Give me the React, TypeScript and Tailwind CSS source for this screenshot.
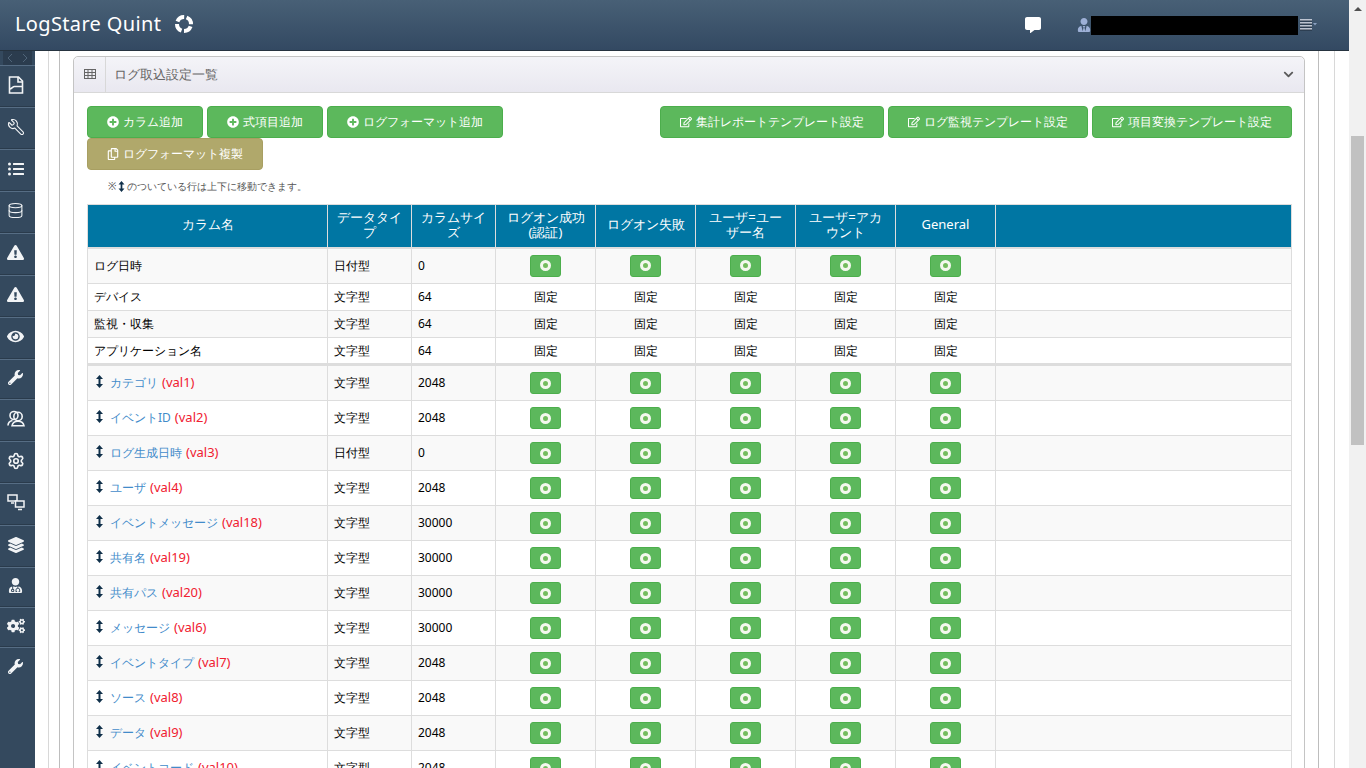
import React from "react";
import { FaPlusCircle, FaRegEdit, FaRegCopy, FaChevronDown, FaCommentAlt, FaUserTie, FaListUl, FaExclamationTriangle, FaEye, FaWrench, FaLayerGroup, FaUserMd, FaCogs } from "react-icons/fa";
import { Wrench, Database, Settings } from "lucide-react";

const DocIcon = () => (
  <svg width="16" height="18" viewBox="0 0 16 18" fill="none" stroke="#f2f4f6" strokeWidth="1.6">
    <path d="M1.5 1h9l4 4v12h-13z" />
    <path d="M10 1v5h4.5" />
    <path d="M1.5 13c2.500 0 3-2.500 5-2.500h7.500" />
  </svg>
);
const PeopleIcon = () => (
  <svg width="18" height="17" viewBox="0 0 18 17" fill="none" stroke="#f2f4f6" strokeWidth="1.6">
    <circle cx="7" cy="5.500" r="4" />
    <circle cx="11" cy="6.500" r="4.200" />
    <path d="M1 15.500c0-3 2-4.500 4.500-5M5 15.800c.5-3 3-4.500 6-4.500s5.500 1.500 6 4.500z" />
  </svg>
);
const MonitorsIcon = () => (
  <svg width="18" height="17" viewBox="0 0 18 17" fill="none" stroke="#f2f4f6" strokeWidth="1.500">
    <rect x="1" y="1" width="9" height="6" />
    <path d="M4 9h3" />
    <rect x="8.500" y="7" width="8.500" height="6" fill="#34495e" />
    <path d="M11 15.500h4" />
  </svg>
);
const GridIcon = () => (
  <svg width="12" height="10" viewBox="0 0 12 10" fill="none" stroke="#666" strokeWidth="1">
    <rect x=".5" y=".5" width="11" height="9" />
    <path d="M.5 3.500h11M.5 6.500h11M4 .5v9M8 .5v9" />
  </svg>
);
const side: React.ReactNode[] = [
  <DocIcon />,
  <Wrench size={18} color="#f2f4f6" strokeWidth={1.5} className="-scale-x-100" />,
  <FaListUl size={16} color="#f2f4f6" />,
  <Database size={17} color="#f2f4f6" strokeWidth={1.5} />,
  <FaExclamationTriangle size={17} color="#f2f4f6" />,
  <FaExclamationTriangle size={17} color="#f2f4f6" />,
  <FaEye size={17} color="#f2f4f6" />,
  <FaWrench size={15} color="#f2f4f6" />,
  <PeopleIcon />,
  <Settings size={18} color="#f2f4f6" strokeWidth={2.2} />,
  <MonitorsIcon />,
  <FaLayerGroup size={16} color="#f2f4f6" />,
  <FaUserMd size={15} color="#f2f4f6" />,
  <FaCogs size={18} color="#f2f4f6" />,
  <FaWrench size={15} color="#f2f4f6" />,
];

const Arrow = ({ h = 13, up }: { h?: number; up?: boolean }) => (
  <svg width="7" height={h} viewBox="0 0 7 13" className={`inline-block shrink-0 ${up ? "-translate-y-[2px]" : ""}`} fill="#10304a">
    <path d="M3.500 0L7 4H4.500v5H7l-3.500 4L0 9h2.500V4H0z" />
  </svg>
);

const Toggle = () => (
  <span className="inline-flex items-center justify-center w-[31px] h-[22px] rounded-[3px] bg-[#5cb85c] border border-[#4cae4c] align-middle">
    <span className="w-[11px] h-[11px] rounded-full border-[3px] border-[#f4f8ee] bg-[#74bd5e]" />
  </span>
);

const Btn = ({ w, gold, icon, children }: { w: string; gold?: boolean; icon: React.ReactNode; children: React.ReactNode }) => (
  <button className={`${w} h-[32px] flex items-center justify-center gap-[4px] rounded-[4px] border text-[12px] text-white ${gold ? "bg-[#b0a86b] border-[#a89f62]" : "bg-[#5cb85c] border-[#4cae4c]"}`}>
    {icon}
    <span>{children}</span>
  </button>
);

const fixedRows: [string, string, string, string, string][] = [
  ["デバイス", "文字型", "64", "h-[27px]", "bg-white"],
  ["監視・収集", "文字型", "64", "h-[27px]", "bg-[#f9f9f9]"],
  ["アプリケーション名", "文字型", "64", "h-[27px]", "bg-white"],
];
const rows: [string, string, string, string][] = [
  ["カテゴリ", "(val1)", "文字型", "2048"],
  ["イベントID", "(val2)", "文字型", "2048"],
  ["ログ生成日時", "(val3)", "日付型", "0"],
  ["ユーザ", "(val4)", "文字型", "2048"],
  ["イベントメッセージ", "(val18)", "文字型", "30000"],
  ["共有名", "(val19)", "文字型", "30000"],
  ["共有パス", "(val20)", "文字型", "30000"],
  ["メッセージ", "(val6)", "文字型", "30000"],
  ["イベントタイプ", "(val7)", "文字型", "2048"],
  ["ソース", "(val8)", "文字型", "2048"],
  ["データ", "(val9)", "文字型", "2048"],
  ["イベントコード", "(val10)", "文字型", "2048"],
];
const five = [0, 1, 2, 3, 4];
const td = "border border-[#ddd] px-[6px] align-middle";
const th = "border border-[#ddd] px-[6px] pb-[2px] font-normal text-[13px] leading-[15px] text-center text-white";

export default function App() {
  return (
    <div className="w-[1366px] h-[768px] overflow-hidden flex bg-white text-black font-['Open_Sans','Noto_Sans_CJK_JP',sans-serif]">
      <div className="w-[1349px] h-full flex flex-col">
        <header className="h-[51px] shrink-0 flex items-center bg-gradient-to-b from-[#486076] to-[#334962] border-b border-[#26333f] text-white">
          <span className="ml-[15px] -mt-[2px] text-[20px] leading-none tracking-[0.35px]">LogStare Quint</span>
          <svg width="20" height="20" viewBox="0 0 20 20" className="ml-[13px] -mt-[2px]" fill="none" stroke="#fff" strokeWidth="4">
            <circle cx="10" cy="10" r="7" strokeDasharray="8.500 2.500" transform="rotate(20 10 10)" />
          </svg>
          <FaCommentAlt size={16} color="#fff" className="ml-[831px]" />
          <FaUserTie size={14} color="#9db0d6" className="ml-[36px]" />
          <div className="w-[207px] h-[19px] bg-black" />
          <svg width="17" height="12" viewBox="0 0 17 12" className="ml-[2px]">
            <path d="M0 1h12M0 4h12M0 7h12M0 10h12" stroke="#e6e9f2" strokeWidth="1.300" />
            <path d="M0 2h12M0 5h12M0 8h12M0 11h12" stroke="#1b2430" strokeWidth=".8" />
            <path d="M13 4h4l-2 2.500z" fill="#8aa0c0" />
          </svg>
        </header>
        <div className="flex-1 min-h-0 flex">
          <aside className="w-[35px] shrink-0 bg-[#34495e] flex flex-col">
            <div className="h-[14px] mx-[3px] bg-[#2b3c4e] flex items-center justify-center gap-[9px]">
              <svg width="6" height="8" viewBox="0 0 6 8" fill="none" stroke="#4f6478"><path d="M5 0L1 4l4 4" /></svg>
              <svg width="6" height="8" viewBox="0 0 6 8" fill="none" stroke="#4f6478"><path d="M1 0l4 4-4 4" /></svg>
            </div>
            {side.map((icon, i) => (
              <div key={i} className={`${i === 7 || i === 12 || i === 13 ? "h-[40px]" : "h-[42px]"} flex items-center justify-center pb-[4px] pr-[4px] border-t border-[#566d84] ${i === 14 ? "" : "shadow-[inset_0_-1px_0_#2a3b4c]"}`}>
                {icon}
              </div>
            ))}
          </aside>
          <main className="flex-1 min-w-0 overflow-hidden pl-[13px] pr-[14px]">
            <div className="h-full border-x border-[#d8d8d8] pl-[10px] pr-[15px]">
              <div className="h-full border-x border-[#bdbdbd] pl-[13px] pr-[13px] pt-[5px]">
                <section className="border border-[#c4c4c4] rounded-t-[5px]">
                  <div className="h-[36px] flex items-center rounded-t-[5px] bg-gradient-to-b from-[#f4f4f8] to-[#e9e8f0] border-b border-[#d8d8d8]">
                    <div className="w-[32px] h-full flex items-center justify-center pb-[2px] border-r border-[#d8d8d8]">
                      <GridIcon />
                    </div>
                    <span className="ml-[8px] pt-[1px] text-[13px] text-[#666]">ログ取込設定一覧</span>
                    <FaChevronDown size={11} color="#5a5a5a" className="ml-auto mr-[10px]" />
                  </div>
                  <div className="pl-[13px] pr-[12px] pt-[13px]">
                    <div className="flex gap-[4px]">
                      <Btn w="w-[116px]" icon={<FaPlusCircle size={12} />}>カラム追加</Btn>
                      <Btn w="w-[116px]" icon={<FaPlusCircle size={12} />}>式項目追加</Btn>
                      <Btn w="w-[176px]" icon={<FaPlusCircle size={12} />}>ログフォーマット追加</Btn>
                      <div className="flex-1" />
                      <Btn w="w-[224px]" icon={<FaRegEdit size={12} />}>集計レポートテンプレート設定</Btn>
                      <Btn w="w-[200px]" icon={<FaRegEdit size={12} />}>ログ監視テンプレート設定</Btn>
                      <Btn w="w-[200px]" icon={<FaRegEdit size={12} />}>項目変換テンプレート設定</Btn>
                    </div>
                    <Btn w="w-[176px]" gold icon={<FaRegCopy size={12} />}>ログフォーマット複製</Btn>
                    <p className="mt-[9px] ml-[21px] h-[14px] flex items-center gap-[2px] text-[10px] leading-[14px] text-[#555]">
                      ※<Arrow h={11} />のついている行は上下に移動できます。
                    </p>
                    <table className="mt-[11px] w-[1205px] table-fixed border-collapse text-[12px]">
                      <colgroup>
                        <col className="w-[240px]" />
                        <col className="w-[84px]" />
                        <col className="w-[84px]" />
                        <col className="w-[100px]" />
                        <col className="w-[100px]" />
                        <col className="w-[100px]" />
                        <col className="w-[100px]" />
                        <col className="w-[100px]" />
                        <col />
                      </colgroup>
                      <thead>
                        <tr className="h-[43px] bg-[#0076a3]">
                          <th className={th}>カラム名</th>
                          <th className={th}>データタイ<br />プ</th>
                          <th className={th}>カラムサイ<br />ズ</th>
                          <th className={th}>ログオン成功<br />(認証)</th>
                          <th className={th}>ログオン失敗</th>
                          <th className={th}>ユーザ=ユー<br />ザー名</th>
                          <th className={th}>ユーザ=アカ<br />ウント</th>
                          <th className={th}>General</th>
                          <th className={th}></th>
                        </tr>
                      </thead>
                      <tbody>
                        <tr className="h-[36px] bg-[#f9f9f9] border-t-2 border-[#ddd]">
                          <td className={td}>ログ日時</td>
                          <td className={td}>日付型</td>
                          <td className={td}>0</td>
                          {five.map((i) => (
                            <td key={i} className={`${td} text-center`}><Toggle /></td>
                          ))}
                          <td className={td}></td>
                        </tr>
                        {fixedRows.map((r, k) => (
                          <tr key={r[0]} className={`${r[3]} ${r[4]} ${k === 2 ? "border-b-[3px] border-[#ddd]" : ""}`}>
                            <td className={td}>{r[0]}</td>
                            <td className={td}>{r[1]}</td>
                            <td className={td}>{r[2]}</td>
                            {five.map((i) => (
                              <td key={i} className={`${td} text-center`}>固定</td>
                            ))}
                            <td className={td}></td>
                          </tr>
                        ))}
                        {rows.map((r, k) => (
                          <tr key={r[0]} className={`${k === 0 ? "h-[36px]" : "h-[35px]"} ${k % 2 === 0 ? "bg-[#f9f9f9]" : "bg-white"}`}>
                            <td className={`${td} pl-[8px]`}>
                              <span className="inline-flex items-center gap-[7px] align-middle">
                                <Arrow up />
                                <span className="flex items-center gap-[4px]">
                                  <span className="text-[#428bca]">{r[0]}</span>
                                  <span className="text-[#f02030] text-[13px]">{r[1]}</span>
                                </span>
                              </span>
                            </td>
                            <td className={td}>{r[2]}</td>
                            <td className={td}>{r[3]}</td>
                            {five.map((i) => (
                              <td key={i} className={`${td} text-center`}><Toggle /></td>
                            ))}
                            <td className={td}></td>
                          </tr>
                        ))}
                      </tbody>
                    </table>
                  </div>
                </section>
              </div>
            </div>
          </main>
        </div>
      </div>
      <div className="w-[17px] h-full bg-[#f1f1f1] flex flex-col items-center">
        <div className="h-[17px] flex items-center justify-center">
          <span className="w-0 h-0 border-x-[4px] border-x-transparent border-b-[4px] border-b-[#505050]" />
        </div>
        <div className="mt-[119px] w-[13px] h-[309px] bg-[#c1c1c1]" />
      </div>
    </div>
  );
}
